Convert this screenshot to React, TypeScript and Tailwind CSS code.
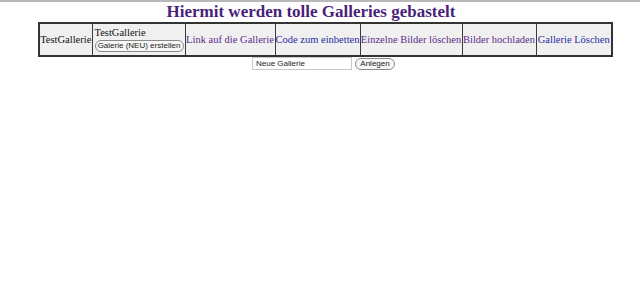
import React from "react";

const serif = { fontFamily: '"Liberation Serif", "Times New Roman", serif' };
const sans = { fontFamily: '"Liberation Sans", Arial, sans-serif' };

export default function App() {
  const cell = "border border-[#3a3a3a] bg-[#f0f0f0] px-0 py-0 text-[10.5px] leading-[13px] whitespace-nowrap overflow-hidden text-center";
  return (
    <div className="w-[640px] h-[299px] bg-white relative overflow-hidden" style={serif}>
      <div className="h-[2px] bg-[#b8b8b8]" />
      <h1 className="text-center font-bold text-[17px] leading-[18px] text-[#4a1f7a] mt-[1px] pr-[18px]">
        Hiermit werden tolle Galleries gebastelt
      </h1>
      <table className="ml-[38px] mt-[1px] border-collapse border-2 border-[#333] table-fixed w-[573px]">
        <colgroup>
          <col className="w-[53px]" />
          <col className="w-[93px]" />
          <col className="w-[90px]" />
          <col className="w-[85px]" />
          <col className="w-[102px]" />
          <col className="w-[74px]" />
          <col className="w-[76px]" />
        </colgroup>
        <tbody>
          <tr className="h-[33px]">
            <td className={cell + " text-[#111]"}>TestGallerie</td>
            <td className={cell + " text-[#111] text-left pl-[2px]"}>
              <div className="leading-[12px] mt-[-1px]">TestGallerie</div>
              <button
                className="mt-[1px] h-[12px] w-[89px] rounded-full border border-[#8a8a8a] bg-[#f7f7f7] text-[8px] leading-[10px] text-[#222] flex items-center justify-center"
                style={sans}
              >
                Galerie (NEU) erstellen
              </button>
            </td>
            <td className={cell + " text-[#5a2a8a]"}>Link auf die Gallerie</td>
            <td className={cell + " text-[#2a2aa0]"}>Code zum einbetten</td>
            <td className={cell + " text-[#5a2a8a]"}>Einzelne Bilder löschen</td>
            <td className={cell + " text-[#5a2a8a]"}>Bilder hochladen</td>
            <td className={cell + " text-[#2a2aa0]"}>Gallerie Löschen</td>
          </tr>
        </tbody>
      </table>
      <div className="flex items-center gap-[3px] ml-[252px]" style={sans}>
        <input
          readOnly
          value="Neue Gallerie"
          className="w-[100px] h-[13px] border border-[#c8c8c8] bg-white px-[3px] text-[8px] text-[#222] outline-none"
        />
        <button className="h-[12px] w-[40px] rounded-full border border-[#8a8a8a] bg-[#f7f7f7] text-[8px] leading-[10px] text-[#222]">
          Anlegen
        </button>
      </div>
    </div>
  );
}
